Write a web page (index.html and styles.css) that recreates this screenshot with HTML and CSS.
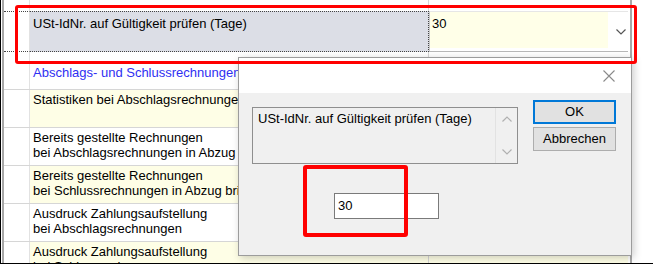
FILE: index.html
```html
<!DOCTYPE html>
<html lang="de">
<head>
  <meta charset="UTF-8" />
  <title>Einstellungen - USt-IdNr.</title>
  <link rel="stylesheet" href="styles.css">
</head>
<body>
  <div class="screen">

    <!-- Settings grid -->
    <div class="grid">
      <div class="row row-top">
        <div class="hdr"></div><div class="label"></div><div class="value"></div>
      </div>
      <div class="row row-selected">
        <div class="hdr"></div>
        <div class="label">USt-IdNr. auf Gültigkeit prüfen (Tage)</div>
        <div class="value combo">
          <span class="combo-edit">30</span>
          <span class="combo-btn">
            <svg width="10" height="6" viewBox="0 0 10 6"><path d="M0.5 0.5 L5 5 L9.5 0.5" fill="none" stroke="#555" stroke-width="1.2"/></svg>
          </span>
        </div>
      </div>
      <div class="row row-group">
        <div class="hdr"></div>
        <div class="label">Abschlags- und Schlussrechnungen</div>
        <div class="value"></div>
      </div>
      <div class="row row-alt">
        <div class="hdr"></div>
        <div class="label">Statistiken bei Abschlagsrechnungen</div>
        <div class="value"></div>
      </div>
      <div class="row">
        <div class="hdr"></div>
        <div class="label">Bereits gestellte Rechnungen<br>bei Abschlagsrechnungen in Abzug bringen</div>
        <div class="value"></div>
      </div>
      <div class="row row-alt">
        <div class="hdr"></div>
        <div class="label">Bereits gestellte Rechnungen<br>bei Schlussrechnungen in Abzug bringen</div>
        <div class="value"></div>
      </div>
      <div class="row">
        <div class="hdr"></div>
        <div class="label">Ausdruck Zahlungsaufstellung<br>bei Abschlagsrechnungen</div>
        <div class="value"></div>
      </div>
      <div class="row row-alt">
        <div class="hdr"></div>
        <div class="label">Ausdruck Zahlungsaufstellung<br>bei Schlussrechnungen</div>
        <div class="value"></div>
      </div>
    </div>

    <!-- Input dialog -->
    <div class="dialog">
      <div class="dialog-title">
        <svg class="close" width="12" height="12" viewBox="0 0 12 12"><path d="M0.5 0.5 L11.5 11.5 M11.5 0.5 L0.5 11.5" stroke="#8a8a8a" stroke-width="1.1"/></svg>
      </div>
      <div class="dialog-body">
        <div class="dialog-main">
          <div class="listbox">
            <div class="listbox-text">USt-IdNr. auf Gültigkeit prüfen (Tage)</div>
            <div class="listbox-scroll">
              <svg width="10" height="6" viewBox="0 0 10 6"><path d="M0.5 5.5 L5 1 L9.5 5.5" fill="none" stroke="#b0b0b0" stroke-width="1.2"/></svg>
              <svg width="10" height="6" viewBox="0 0 10 6"><path d="M0.5 0.5 L5 5 L9.5 0.5" fill="none" stroke="#b0b0b0" stroke-width="1.2"/></svg>
            </div>
          </div>
          <div class="input-box">30</div>
        </div>
        <div class="dialog-buttons">
          <div class="btn btn-default">OK</div>
          <div class="btn">Abbrechen</div>
        </div>
      </div>
    </div>

    <!-- Red highlight marks -->
    <div class="mark mark-row"></div>
    <div class="mark mark-input"></div>
  </div>
</body>
</html>
```

FILE: styles.css
```css
/* Base */
* {
  box-sizing: border-box;
}
body {
  margin: 0;
  width: 653px;
  height: 265px;
  overflow: hidden;
  background: #fff;
  font-family: 'Liberation Sans', Arial, sans-serif;
  font-size: 13px;
  color: #000;
}

/* Screenshot frame */
.screen {
  position: relative;
  height: 264px;
  padding-left: 1px;
  border-left: 1px solid #000;
  border-bottom: 1px solid #000;
  overflow: hidden;
}

/* Settings grid */
.grid {
  width: 630px;
  border-left: 2px solid #a8a8a8;
  border-right: 2px solid #a8a8a8;
}
.row {
  display: grid;
  grid-template-columns: 26px 399px 199px;
  height: 38px;
  border-bottom: 1px solid #d6d6d6;
}
.hdr {
  border-right: 1px solid #e2e2e2;
}
.label {
  padding: 2px 3px 0;
  line-height: 15px;
  white-space: nowrap;
  overflow: hidden;
  border-right: 1px solid #d6d6d6;
}
.row-top {
  height: 11px;
  border-bottom: none;
}
.row-alt .label,
.row-alt .value {
  background: #fefee6;
}
.row-group .label {
  padding-top: 13px;
  color: #2f2ff2;
}

/* Selected row with focus rectangle */
.row-selected {
  height: 41px;
  border-bottom: none;
}
.row-selected .hdr,
.row-selected .label {
  border-top: 1px dotted #444;
  border-bottom: 1px dotted #444;
}
.row-selected .label {
  background: #dcdee6;
  border-right: 1px dotted #444;
  padding-top: 4px;
}
.row-selected .value {
  border-top: 1px solid #e6e6e6;
  border-bottom: 1px solid #b8b8b8;
  border-left: 1px solid #c8c8c8;
}
.combo {
  display: flex;
}
.combo-edit {
  width: 178px;
  height: 36px;
  background: #ffffe8;
  padding: 4px 2px 0;
  line-height: 15px;
}
.combo-btn {
  flex: 1;
  display: flex;
  align-items: center;
  justify-content: center;
  padding-left: 5px;
}

/* Dialog */
.dialog {
  position: absolute;
  left: 237px;
  top: 57px;
  width: 394px;
  height: 199px;
  background: #f0f0f0;
  border: 1px solid #9c9c9c;
  box-shadow: 2px 2px 8px rgba(0, 0, 0, 0.2);
}
.dialog-title {
  height: 35px;
  background: #fff;
  display: flex;
  align-items: center;
  justify-content: flex-end;
  padding-right: 16px;
}
.dialog-body {
  display: flex;
  gap: 15px;
  padding: 7px 13px 0;
}
.listbox {
  display: flex;
  width: 266px;
  height: 57px;
  margin-top: 7px;
  border: 1px solid #8f8f8f;
}
.listbox-text {
  flex: 1;
  padding: 3px 5px 0;
  line-height: 15px;
}
.listbox-scroll {
  width: 22px;
  border-left: 1px solid #e2e2e2;
  display: flex;
  flex-direction: column;
  align-items: center;
  justify-content: space-between;
  padding: 8px 0 8px;
}
.input-box {
  width: 105px;
  height: 26px;
  margin: 29px 0 0 82px;
  background: #fff;
  border: 1px solid #7a7a7a;
  padding: 0 3px;
  line-height: 24px;
}
.dialog-buttons {
  display: flex;
  flex-direction: column;
  gap: 3px;
}
.btn {
  width: 83px;
  height: 24px;
  background: #e1e1e1;
  border: 1px solid #adadad;
  text-align: center;
  line-height: 22px;
}
.btn-default {
  border: 2px solid #0078d7;
  line-height: 20px;
}

/* Red highlight marks */
.mark {
  position: absolute;
  border: 3px solid #f00;
  border-radius: 3px;
}
.mark-row {
  left: 14px;
  top: 5px;
  width: 622px;
  height: 59px;
}
.mark-input {
  left: 302px;
  top: 165px;
  width: 105px;
  height: 72px;
  border-width: 4px;
}
```
